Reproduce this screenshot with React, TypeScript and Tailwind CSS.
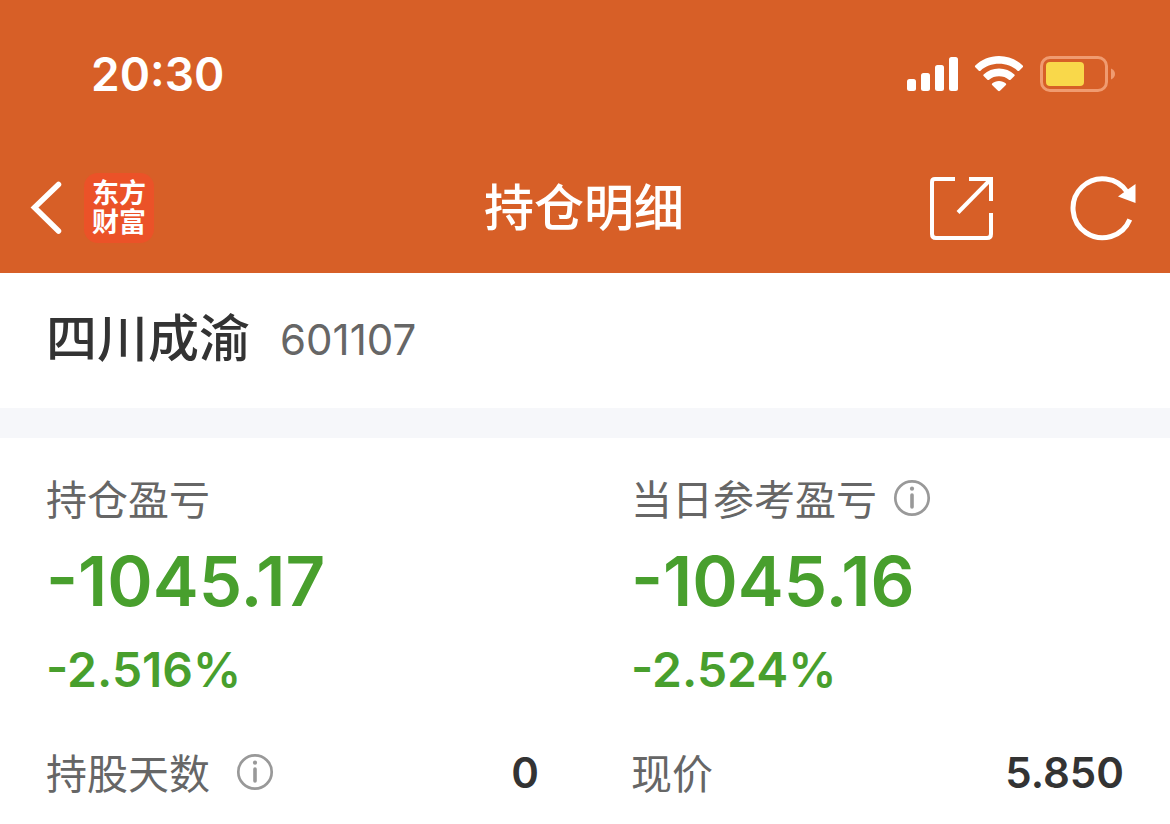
import type { ReactNode } from 'react';

function SignalIcon() {
  return (
    <svg width="52" height="36" viewBox="0 0 52 36" fill="#fff" aria-hidden="true">
      <rect x="1" y="23" width="9" height="12" rx="2.5" />
      <rect x="15" y="17" width="9" height="18" rx="2.5" />
      <rect x="29" y="9" width="9" height="26" rx="2.5" />
      <rect x="43" y="1" width="9" height="34" rx="2.5" />
    </svg>
  );
}

function WifiIcon() {
  return (
    <svg width="50" height="36" viewBox="0 0 50 36" fill="#fff" aria-hidden="true">
      <path d="M25 0C34.300 0 42.700 3.600 48.700 9.500Q49.500 10.300 48.700 11.200L45.200 14.700Q44.400 15.500 43.500 14.700C38.600 10.100 32.100 7.800 25 7.800S11.400 10.100 6.500 14.700Q5.600 15.500 4.800 14.700L1.300 11.200Q.500 10.300 1.300 9.500C7.300 3.600 15.700 0 25 0Z" />
      <path d="M25 12.500C31 12.500 36.300 14.700 40.400 18.400Q41.200 19.200 40.400 20L36.600 23.700Q35.800 24.500 34.900 23.700C32.200 21.400 28.800 20.300 25 20.300S17.800 21.400 15.100 23.700Q14.200 24.500 13.400 23.700L9.600 20Q8.800 19.200 9.600 18.400C13.700 14.700 19 12.500 25 12.500Z" />
      <path d="M25 25C27.600 25 30.100 26 31.900 27.600Q32.600 28.300 31.900 29L26 34.800Q25 35.700 24 34.800L18.100 29Q17.400 28.300 18.100 27.600C19.900 26 22.400 25 25 25Z" />
    </svg>
  );
}

function BatteryIcon() {
  return (
    <svg width="76" height="36" viewBox="0 0 76 36" aria-hidden="true">
      <rect x="1.500" y="1.500" width="65" height="33" rx="8.500" fill="none" stroke="#f09b70" strokeWidth="3" />
      <rect x="6" y="6" width="38" height="24" rx="4" fill="#f9d84a" />
      <path d="M71 12.500C73.600 13.600 75 15.600 75 18S73.600 22.400 71 23.500Z" fill="#f09b70" />
    </svg>
  );
}

function InfoButton({ label }: { label: string }) {
  return (
    <button type="button" aria-label={label} className="shrink-0">
      <svg width="38" height="38" viewBox="0 0 38 38" fill="none" aria-hidden="true">
        <circle cx="19" cy="19" r="16.700" stroke="#999" strokeWidth="2.700" />
        <circle cx="19" cy="9.700" r="2.100" fill="#999" />
        <path d="M19 16V28" stroke="#999" strokeWidth="3.600" strokeLinecap="round" />
      </svg>
    </button>
  );
}

function Profit({ label, amount, percent, info }: { label: string; amount: string; percent: string; info?: ReactNode }) {
  return (
    <div>
      <div className="flex h-[60px] items-center gap-4 font-['Noto_Sans_CJK_SC',sans-serif] text-[41px] text-[#666]">
        {label}
        {info}
      </div>
      <p className="text-[69px] leading-[106px] font-semibold text-[#489f2d]">{amount}</p>
      <p className="text-[48px] leading-[72px] font-semibold text-[#489f2d]">{percent}</p>
    </div>
  );
}

function Fact({ label, value, info }: { label: string; value: string; info?: ReactNode }) {
  return (
    <div className="flex h-[60px] items-center justify-between">
      <div className="flex items-center gap-[26px] font-['Noto_Sans_CJK_SC',sans-serif] text-[41px] text-[#666]">
        {label}
        {info}
      </div>
      <span className="text-[42px] font-semibold text-[#333]">{value}</span>
    </div>
  );
}

export default function App() {
  return (
    <div className="min-h-screen bg-white font-['Inter','Noto_Sans_CJK_SC',sans-serif]">
      <header className="bg-[#d75f27] pb-[5px] text-white">
        <div className="flex h-[148px] items-center justify-between pr-[54px] pl-[91px]">
          <time className="text-[46px] font-semibold">20:30</time>
          <div className="flex items-center gap-4">
            <SignalIcon />
            <WifiIcon />
            <BatteryIcon />
          </div>
        </div>
        <nav className="grid h-[120px] grid-cols-[1fr_auto_1fr] items-center pr-8 pl-[30px]">
          <div className="flex items-center gap-[22px]">
            <button type="button" aria-label="返回">
              <svg width="32" height="54" viewBox="0 0 32 54" fill="none" aria-hidden="true">
                <path d="M28.500 3.500L4.500 26.500L28.500 50" stroke="#fff" strokeWidth="5.500" strokeLinecap="round" />
              </svg>
            </button>
            <a href="#" className="flex size-[70px] items-center justify-center rounded-[14px] bg-[#eb5228] text-[27px] leading-[29px] font-bold">
              <span className="w-[54px]">东方财富</span>
            </a>
          </div>
          <h1 className="text-[50px] font-medium">持仓明细</h1>
          <div className="flex items-center justify-end gap-[76px]">
            <button type="button" aria-label="分享">
              <svg width="64" height="64" viewBox="0 0 64 64" fill="none" stroke="#fff" strokeWidth="4" aria-hidden="true">
                <path d="M25 3H5Q2 3 2 6V58Q2 62 6 62H57Q61 62 61 58V37" />
                <path d="M39 3H61V25" />
                <path d="M60 4L28 36.500" />
              </svg>
            </button>
            <button type="button" aria-label="刷新">
              <svg width="68" height="66" viewBox="0 0 68 66" fill="none" aria-hidden="true">
                <path d="M57.500 17.500A29.500 29.500 0 1 0 59.800 44.500" stroke="#fff" strokeWidth="5" />
                <path d="M65.500 9V28L48 21.500Z" fill="#fff" />
              </svg>
            </button>
          </div>
        </nav>
      </header>
      <main>
        <section className="flex h-[135px] items-center gap-[30px] px-[46px] pb-[3px]">
          <h2 className="text-[51px] font-medium text-[#333]">四川成渝</h2>
          <span className="text-[42px] text-[#666]">601107</span>
        </section>
        <div className="h-[30px] bg-[#f6f7fa]" />
        <section className="grid grid-cols-2 gap-x-[92px] gap-y-9 px-[46px] pt-[30px] pb-6">
          <Profit label="持仓盈亏" amount="-1045.17" percent="-2.516%" />
          <Profit label="当日参考盈亏" amount="-1045.16" percent="-2.524%" info={<InfoButton label="当日参考盈亏说明" />} />
          <Fact label="持股天数" value="0" info={<InfoButton label="持股天数说明" />} />
          <Fact label="现价" value="5.850" />
        </section>
      </main>
    </div>
  );
}
